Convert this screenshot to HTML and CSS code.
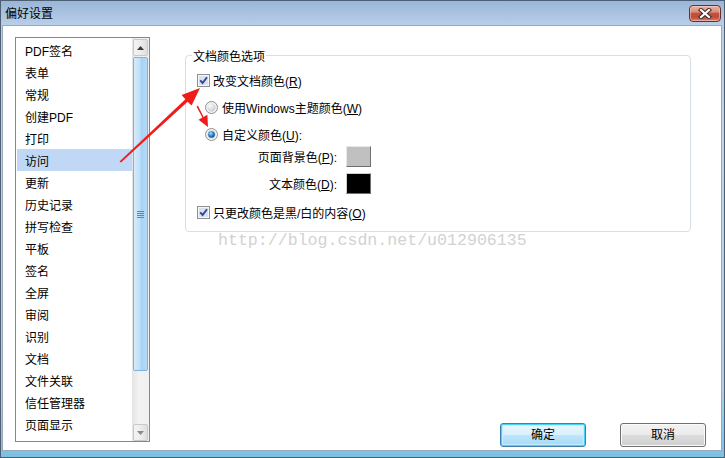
FILE: index.html
```html
<!DOCTYPE html>
<html lang="zh-CN">
<head>
<meta charset="utf-8">
<title>偏好设置</title>
<link rel="stylesheet" href="styles.css">
</head>
<body>
<div class="window">
  <div class="titlebar">
    <span class="title">偏好设置</span>
    <div class="close" aria-label="关闭">
      <svg width="14" height="11" viewBox="0 0 14 11"><path d="M3 2 L11 9 M11 2 L3 9" stroke="#3a2a2a" stroke-width="4.2" stroke-linecap="square" fill="none"/><path d="M3 2 L11 9 M11 2 L3 9" stroke="#fff" stroke-width="2.2" stroke-linecap="square" fill="none"/></svg>
    </div>
  </div>
  <div class="client">
    <div class="listbox">
      <ul class="items">
        <li>PDF签名</li>
        <li>表单</li>
        <li>常规</li>
        <li>创建PDF</li>
        <li>打印</li>
        <li class="selected">访问</li>
        <li>更新</li>
        <li>历史记录</li>
        <li>拼写检查</li>
        <li>平板</li>
        <li>签名</li>
        <li>全屏</li>
        <li>审阅</li>
        <li>识别</li>
        <li>文档</li>
        <li>文件关联</li>
        <li>信任管理器</li>
        <li>页面显示</li>
      </ul>
      <div class="scrollbar">
        <div class="sb-btn"><svg width="7" height="4" viewBox="0 0 7 4"><path d="M0 4 L3.5 0 L7 4 Z" fill="#3a3a3a"/></svg></div>
        <div class="sb-track">
          <div class="thumb"><svg width="7" height="7" viewBox="0 0 7 7"><path d="M0 0.5H7M0 2.5H7M0 4.5H7M0 6.5H7" stroke="#5b86b0" stroke-width="1"/></svg></div>
        </div>
        <div class="sb-btn"><svg width="7" height="4" viewBox="0 0 7 4"><path d="M0 0 L7 0 L3.5 4 Z" fill="#8a8a8a"/></svg></div>
      </div>
    </div>
    <div class="right">
      <div class="group">
        <div class="group-title">文档颜色选项</div>
        <div class="row check-row r1">
          <svg class="box" width="13" height="13" viewBox="0 0 13 13"><rect x="0.5" y="0.5" width="12" height="12" fill="#f6f6f6" stroke="#8e8f8f"/><rect x="2" y="2" width="9" height="9" fill="#d9e1ea"/><path d="M3.2 6.3 L5.6 9 L10 3.2" stroke="#2f46a0" stroke-width="1.9" fill="none"/></svg>
          <span>改变文档颜色(<u>R</u>)</span>
        </div>
        <div class="row radio-row r2">
          <svg class="box" width="13" height="13" viewBox="0 0 13 13"><defs><radialGradient id="ro" cx="0.35" cy="0.3" r="0.8"><stop offset="0" stop-color="#fafafa"/><stop offset="1" stop-color="#c9c9c9"/></radialGradient></defs><circle cx="6.5" cy="6.5" r="6" fill="#f4f4f4" stroke="#8e8f8f"/><circle cx="6.5" cy="6.5" r="4.2" fill="url(#ro)"/></svg>
          <span>使用Windows主题颜色(<u>W</u>)</span>
        </div>
        <div class="row radio-row r3">
          <svg class="box" width="13" height="13" viewBox="0 0 13 13"><defs><radialGradient id="rs" cx="0.4" cy="0.35" r="0.7"><stop offset="0" stop-color="#a8e4ff"/><stop offset="0.5" stop-color="#2b8bd8"/><stop offset="1" stop-color="#0b3e86"/></radialGradient></defs><circle cx="6.5" cy="6.5" r="6" fill="#f4f4f4" stroke="#8e8f8f"/><circle cx="6.5" cy="6.5" r="4.2" fill="#d5d5d5"/><circle cx="6.5" cy="6.5" r="3.3" fill="url(#rs)"/></svg>
          <span>自定义颜色(<u>U</u>):</span>
        </div>
        <div class="row color-row r4">
          <span class="clabel">页面背景色(<u>P</u>):</span>
          <span class="swatch gray"></span>
        </div>
        <div class="row color-row r5">
          <span class="clabel">文本颜色(<u>D</u>):</span>
          <span class="swatch black"></span>
        </div>
        <div class="row check-row r6">
          <svg class="box" width="13" height="13" viewBox="0 0 13 13"><rect x="0.5" y="0.5" width="12" height="12" fill="#f6f6f6" stroke="#8e8f8f"/><rect x="2" y="2" width="9" height="9" fill="#d9e1ea"/><path d="M3.2 6.3 L5.6 9 L10 3.2" stroke="#2f46a0" stroke-width="1.9" fill="none"/></svg>
          <span>只更改颜色是黑/白的内容(<u>O</u>)</span>
        </div>
      </div>
      <div class="buttons">
        <div class="btn default">确定</div>
        <div class="btn">取消</div>
      </div>
    </div>
  </div>
  <div class="watermark">http://blog.csdn.net/u012906135</div>
  <svg class="arrows" width="725" height="458" viewBox="0 0 725 458">
    <polygon points="119.5,161.5 185.4,99.3 181.6,95 200,88 191.6,105.4 187.6,101.7 121,162.6" fill="#f01c1c"/>
    <polygon points="196.5,106.5 202.4,117.6 198.6,119.8 208,127 207.4,114.8 203.6,117 198,105.8" fill="#f01c1c"/>
  </svg>
</div>
</body>
</html>
```

FILE: styles.css
```css
* { box-sizing: border-box; }
html, body { margin: 0; padding: 0; background: #fff; }
body {
  font: 12px "Liberation Sans", "Noto Sans CJK SC", sans-serif;
  color: #000;
}
.window {
  position: relative;
  width: 725px;
  height: 458px;
  border: 1px solid #4d5f75;
  display: flex;
  flex-direction: column;
  background: linear-gradient(#9ab5d6 0, #b8cfe9 24px, #bdd4ec 30%, #aecfea 85%, #7cc0e4 100%);
}
.titlebar {
  height: 24px;
  flex: none;
  display: flex;
  align-items: center;
  justify-content: space-between;
  padding: 1px 3px 0 4px;
}
.title { font-size: 12px; line-height: 16px; }
.close {
  width: 32px;
  height: 17px;
  margin-top: -1px;
  border: 1px solid #6a2f2a;
  border-radius: 4px;
  display: flex;
  align-items: center;
  justify-content: center;
  background: linear-gradient(#eab2a6 0, #d98c7b 40%, #c6503c 50%, #c24a36 75%, #d7856f 100%);
  box-shadow: inset 0 0 0 1px rgba(255,220,210,0.5);
}
.client {
  flex: 1;
  margin: 0 2px 6px 1px;
  border: 1px solid #98a9bc;
  background: #fff;
  display: flex;
  padding: 11px 15px 3px 12px;
}
.listbox {
  width: 135px;
  height: 405px;
  flex: none;
  border: 1px solid #828790;
  display: flex;
}
.items {
  flex: 1;
  margin: 0;
  padding: 1px 0 0 0;
  list-style: none;
}
.items li {
  height: 22px;
  line-height: 22px;
  padding-top: 2px;
  margin-left: 1px;
  padding-left: 8px;
  white-space: nowrap;
}
.items li.selected { background: #c0d8f6; }
.scrollbar {
  width: 17px;
  flex: none;
  display: flex;
  flex-direction: column;
  background: linear-gradient(to right, #e3e3e3, #f2f2f2 40%, #f0f0f0);
}
.sb-btn {
  height: 17px;
  flex: none;
  margin: 1px 1px 0 1px;
  border: 1px solid #c8c8c8;
  border-radius: 2px;
  background: linear-gradient(to right, #f4f4f4, #ececec 50%, #dedede);
  display: flex;
  align-items: center;
  justify-content: center;
}
.sb-btn:last-child { margin: 0 1px 1px 1px; }
.sb-track { flex: 1; display: flex; flex-direction: column; padding: 1px 1px 53px 1px; }
.thumb {
  height: 314px;
  border: 1px solid #7fb1df;
  border-radius: 2px;
  background: linear-gradient(to right, #d7ebfb, #bfe0f9 45%, #a8d3f4 55%, #b3daf6);
  display: flex;
  align-items: center;
  justify-content: center;
}
.right {
  margin-left: 35px;
  flex: 1;
  display: flex;
  flex-direction: column;
}
.group {
  width: 506px;
  margin-top: 18px;
  border: 1px solid #d5dfe5;
  border-radius: 4px;
  padding: 0 0 9px 11px;
}
.group-title {
  display: block;
  width: max-content;
  margin: -7px 0 0 -5px;
  padding: 0 1px;
  background: #fff;
  line-height: 16px;
  height: 16px;
}
.row {
  display: flex;
  align-items: center;
  height: 20px;
  white-space: nowrap;
}
.row .box { flex: none; }
.check-row .box { margin-right: 3px; }
.radio-row { padding-left: 8px; }
.radio-row .box { margin-right: 4px; }
.r1 { margin-top: 5px; }
.r2 { margin-top: 7px; }
.r3 { margin-top: 7px; }
.r4 { margin-top: 2px; height: 21px; }
.r5 { margin-top: 6px; height: 21px; }
.r6 { margin-top: 8px; }
.clabel { width: 140px; text-align: right; margin-right: 9px; }
.swatch {
  width: 25px;
  height: 21px;
  border: 1px solid;
}
.swatch.gray {
  background: #c0c0c0;
  border-color: #e8e8e8 #6f6f6f #6f6f6f #e8e8e8;
}
.swatch.black {
  background: #000;
  border-color: #d0d0d0 #6f6f6f #6f6f6f #d0d0d0;
}
.buttons {
  margin-top: auto;
  display: flex;
  justify-content: flex-end;
  gap: 34px;
}
.btn {
  width: 86px;
  height: 24px;
  border: 1px solid #707070;
  border-radius: 3px;
  background: linear-gradient(#f2f2f2 0, #ebebeb 50%, #dddddd 50%, #cfcfcf 100%);
  box-shadow: inset 0 0 0 1px #fbfbfb;
  display: flex;
  align-items: center;
  justify-content: center;
  line-height: 16px;
}
.btn.default {
  border-color: #3c7fb1;
  background: linear-gradient(#eaf6fd 0, #d9f0fc 50%, #bee6fd 50%, #a7d9f5 100%);
  box-shadow: inset 0 0 0 1px #48d2fb, inset 0 0 0 2px #c4ecfd;
}
.watermark {
  position: absolute;
  left: 217px;
  top: 231px;
  font: 16.6px/18px "Liberation Mono", monospace;
  color: #d2d2d2;
  white-space: nowrap;
}
.arrows {
  position: absolute;
  left: -1px;
  top: -1px;
  pointer-events: none;
}
```
